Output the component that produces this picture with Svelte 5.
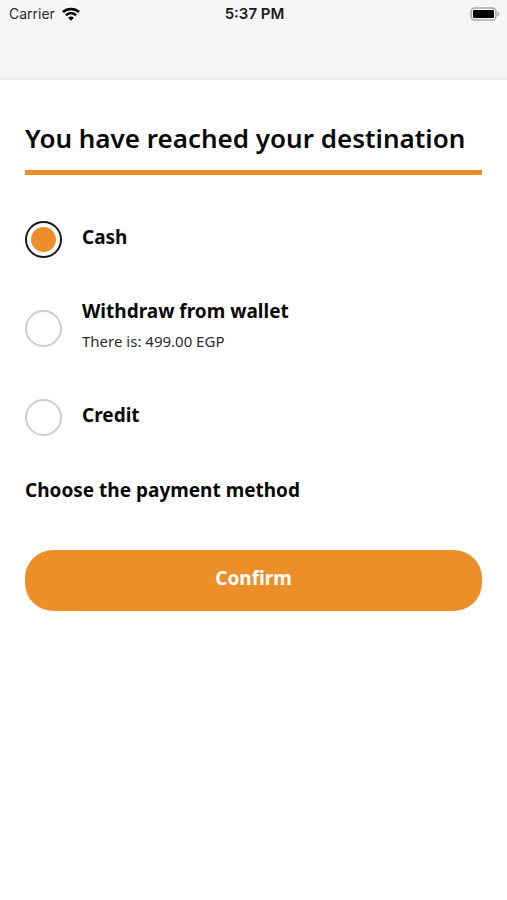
<script lang="ts">
    interface Method {
        id: string;
        label: string;
        note?: string;
    }

    const methods: Method[] = [
        { id: 'cash', label: 'Cash' },
        { id: 'wallet', label: 'Withdraw from wallet', note: 'There is: 499.00 EGP' },
        { id: 'credit', label: 'Credit' }
    ];

    let selected = $state('cash');
</script>

<header class="nav-bar">
    <div class="status">
        <span class="carrier">
            Carrier
            <svg class="wifi" viewBox="0 0 18 14" aria-hidden="true">
                <path d="M.9 5C5.5.9 12.5.9 17.1 5" />
                <path d="M3.9 8.2c3-2.6 7.2-2.6 10.2 0" />
                <path class="dot" d="M6.1 10.7c1.7-1.5 4.1-1.5 5.8 0L9 13.8z" />
            </svg>
        </span>
        <time class="clock">5:37 PM</time>
        <svg class="battery" viewBox="0 0 30 14" aria-hidden="true">
            <rect class="shell" x="1" y="1" width="25" height="12" rx="4" />
            <rect x="3" y="3" width="21" height="8" rx="1" />
            <path class="cap" d="M27.5 4.5c2.4 1 2.4 4 0 5z" />
        </svg>
    </div>
</header>

<main>
    <h1>You have reached your destination</h1>

    <form onsubmit={(e) => e.preventDefault()}>
        <div class="methods" role="radiogroup" aria-labelledby="hint">
            {#each methods as method (method.id)}
                <label class="method">
                    <input type="radio" name="method" value={method.id} bind:group={selected} />
                    <span class="text">
                        <span class="label">{method.label}</span>
                        {#if method.note}
                            <span class="note">{method.note}</span>
                        {/if}
                    </span>
                </label>
            {/each}
        </div>

        <p id="hint">Choose the payment method</p>

        <button type="submit">Confirm</button>
    </form>
</main>

<style>
    :global(body) {
        background-color: #fff;
        color: #0a0a0a;
        font-family: 'Noto Sans', 'Open Sans', sans-serif;
    }

    .nav-bar {
        box-sizing: border-box;
        height: 80px;
        padding: 4px 7px 0 9px;
        background-color: #f6f6f6;
        border-bottom: 2px solid #e9e9e9;
        font-family: Inter, 'Liberation Sans', sans-serif;
    }

    .status {
        display: grid;
        grid-template-columns: 1fr auto 1fr;
        align-items: center;
        font-size: 14px;
        line-height: 20px;
    }

    .carrier {
        display: flex;
        align-items: center;
        gap: 7px;
        color: #2c2c2c;
    }

    .wifi {
        width: 18px;
        height: 14px;
        fill: none;
        stroke: #000;
        stroke-width: 2.6;
    }

    .wifi .dot {
        fill: #000;
        stroke: none;
    }

    .clock {
        color: #1a1a1a;
        font-size: 15px;
        font-weight: 600;
    }

    .battery {
        justify-self: end;
        width: 30px;
        height: 14px;
    }

    .battery .shell {
        fill: none;
        stroke: #a9a9a9;
        stroke-width: 1.6;
    }

    .battery .cap {
        fill: #a9a9a9;
    }

    main {
        padding: 38px 25px;
    }

    h1 {
        margin: 0;
        padding-bottom: 12px;
        border-bottom: 5px solid #ec8f29;
        font-size: 26px;
        font-weight: 600;
        line-height: 40px;
    }

    .methods {
        display: flex;
        flex-direction: column;
        gap: 29px;
        padding-top: 34px;
    }

    .method {
        display: flex;
        align-items: center;
        gap: 20px;
        height: 60px;
    }

    input {
        box-sizing: border-box;
        flex: none;
        width: 37px;
        height: 37px;
        margin: 0;
        appearance: none;
        background-color: #fff;
        border: 2px solid #cdcdcd;
        border-radius: 50%;
    }

    input:checked {
        padding: 4px;
        background-color: #ec8f29;
        background-clip: content-box;
        border-color: #1c1c1c;
    }

    .text {
        display: flex;
        flex-direction: column;
        padding-bottom: 5px;
    }

    .label,
    #hint,
    button {
        font-size: 19px;
        font-weight: 700;
        line-height: 30px;
    }

    .note {
        color: #2c2c2c;
        font-size: 15px;
        line-height: 30px;
    }

    #hint {
        margin: 0;
        padding: 28px 0 45px;
    }

    button {
        display: block;
        width: 100%;
        height: 61px;
        padding: 0 0 6px;
        background-color: #ec8f29;
        border: none;
        border-radius: 28px;
        color: #fff;
        font-family: inherit;
    }
</style>
